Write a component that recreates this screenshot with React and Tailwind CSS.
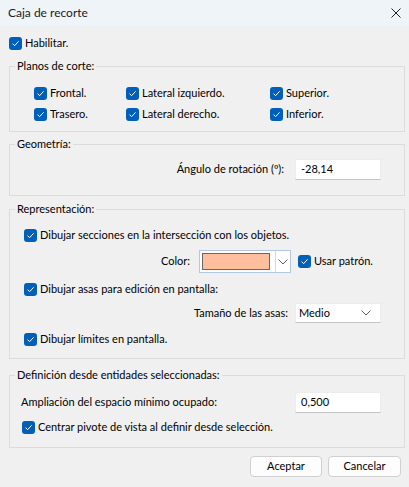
import { useState } from "react";

function Check({ label, checked = true, onChange, className = "" }) {
  return (
    <label className={`flex items-center gap-[3px] h-4 cursor-default ${className}`}>
      <span
        onClick={onChange}
        className="w-[13px] h-[13px] rounded-[3px] bg-[#005fb8] flex items-center justify-center shrink-0"
      >
        {checked && (
          <svg width="9" height="9" viewBox="0 0 9 9">
            <path d="M1.5 4.6 L3.6 6.7 L7.6 2.3" fill="none" stroke="#fff" strokeWidth="1" />
          </svg>
        )}
      </span>
      <span className="whitespace-nowrap">{label}</span>
    </label>
  );
}

function Group({ title, className = "", children }) {
  return (
    <fieldset className={`border border-[#dcdcdc] ${className}`}>
      <legend className="ml-[5px] px-[2px] leading-4">{title}</legend>
      {children}
    </fieldset>
  );
}

function Chevron() {
  return (
    <svg width="10" height="6" viewBox="0 0 10 6">
      <path d="M0.5 0.5 L5 5 L9.5 0.5" fill="none" stroke="#5f5f5f" strokeWidth="1" />
    </svg>
  );
}

export default function App() {
  const [flags, setFlags] = useState({
    enabled: true,
    front: true,
    back: true,
    left: true,
    right: true,
    top: true,
    bottom: true,
    sections: true,
    pattern: true,
    grips: true,
    bounds: true,
    pivot: true,
  });
  const toggle = (k) => () => setFlags((f) => ({ ...f, [k]: !f[k] }));

  return (
    <div
      className="w-[409px] h-[487px] bg-[#f0f0f0] text-[11px] text-black flex flex-col"
      style={{ fontFamily: 'Lato, "Noto Sans", sans-serif' }}
    >
      {/* Title bar */}
      <div className="h-[26px] bg-[#eff4f9] flex items-center justify-between pl-2 pr-[8px] text-[12px] text-[#1b1b1b]">
        <span>Caja de recorte</span>
        <svg width="10" height="10" viewBox="0 0 10 10">
          <path d="M0.5 0.5 L9.5 9.5 M9.5 0.5 L0.5 9.5" stroke="#222" strokeWidth="1" />
        </svg>
      </div>

      <div className="flex flex-col pl-[9px] pr-[4px] pt-[9px]">
        <Check label="Habilitar." checked={flags.enabled} onChange={toggle("enabled")} />

        {/* Planos de corte */}
        <Group title="Planos de corte:" className="mt-[7px] pt-[11px] pb-[9px]">
          <div className="grid grid-cols-[92px_144px_1fr] gap-y-[5px] pl-6">
            <Check label="Frontal." checked={flags.front} onChange={toggle("front")} />
            <Check label="Lateral izquierdo." checked={flags.left} onChange={toggle("left")} />
            <Check label="Superior." checked={flags.top} onChange={toggle("top")} />
            <Check label="Trasero." checked={flags.back} onChange={toggle("back")} />
            <Check label="Lateral derecho." checked={flags.right} onChange={toggle("right")} />
            <Check label="Inferior." checked={flags.bottom} onChange={toggle("bottom")} />
          </div>
        </Group>

        {/* Geometría */}
        <Group title="Geometría:" className="mt-1 pt-[7px] pb-[15px]">
          <div className="flex items-center justify-end pr-[23px] gap-[11px]">
            <span>Ángulo de rotación (º):</span>
            <div className="w-[86px] h-[21px] bg-white border border-[#ececec] border-b-[#c4c4c4] flex items-center px-[5px]">
              -28,14
            </div>
          </div>
        </Group>

        {/* Representación */}
        <Group title="Representación:" className="mt-[5px] pt-[10px] pb-[11px]">
          <div className="flex flex-col pl-[14px] pr-[23px]">
            <Check
              label="Dibujar secciones en la intersección con los objetos."
              checked={flags.sections}
              onChange={toggle("sections")}
            />
            <div className="flex items-center mt-[7px]">
              <span className="w-[166px] text-right mr-[9px]">Color:</span>
              <div className="w-[92px] h-[23px] border border-[#b3c7e0] bg-white flex">
                <div className="flex-1 p-[2px] pr-[5px]">
                  <div className="w-full h-full bg-[#ffbf9f] border-[1.5px] border-[#666]" />
                </div>
                <div className="w-[15px] border-l border-[#d8d8d8] flex items-center justify-center">
                  <Chevron />
                </div>
              </div>
              <Check
                label="Usar patrón."
                className="ml-[7px]"
                checked={flags.pattern}
                onChange={toggle("pattern")}
              />
            </div>
            <Check
              label="Dibujar asas para edición en pantalla:"
              className="mt-[8px]"
              checked={flags.grips}
              onChange={toggle("grips")}
            />
            <div className="flex items-center justify-end mt-[6px] gap-[7px]">
              <span>Tamaño de las asas:</span>
              <div className="w-[86px] h-[20px] bg-white border border-[#ececec] border-b-[#c4c4c4] flex items-center justify-between pl-[3px] pr-[9px]">
                <span>Medio</span>
                <Chevron />
              </div>
            </div>
            <Check
              label="Dibujar límites en pantalla."
              className="mt-[8px]"
              checked={flags.bounds}
              onChange={toggle("bounds")}
            />
          </div>
        </Group>

        {/* Definición desde entidades */}
        <Group title="Definición desde entidades seleccionadas:" className="mt-[8px] pt-[9px] pb-3">
          <div className="flex flex-col pl-[11px] pr-[23px]">
            <div className="flex items-center justify-between">
              <span>Ampliación del espacio mínimo ocupado:</span>
              <div className="w-[86px] h-[21px] bg-white border border-[#ececec] border-b-[#c4c4c4] flex items-center px-[5px]">
                0,500
              </div>
            </div>
            <Check
              label="Centrar pivote de vista al definir desde selección."
              className="mt-[6px] ml-px"
              checked={flags.pivot}
              onChange={toggle("pivot")}
            />
          </div>
        </Group>

        {/* Botones */}
        <div className="flex justify-end gap-[6px] mt-[8px] pr-[4px]">
          <button className="w-[72px] h-[21px] bg-[#fdfdfd] border border-[#d0d0d0] rounded-[4px]">
            Aceptar
          </button>
          <button className="w-[73px] h-[21px] bg-[#fdfdfd] border border-[#d0d0d0] rounded-[4px]">
            Cancelar
          </button>
        </div>
      </div>
    </div>
  );
}
